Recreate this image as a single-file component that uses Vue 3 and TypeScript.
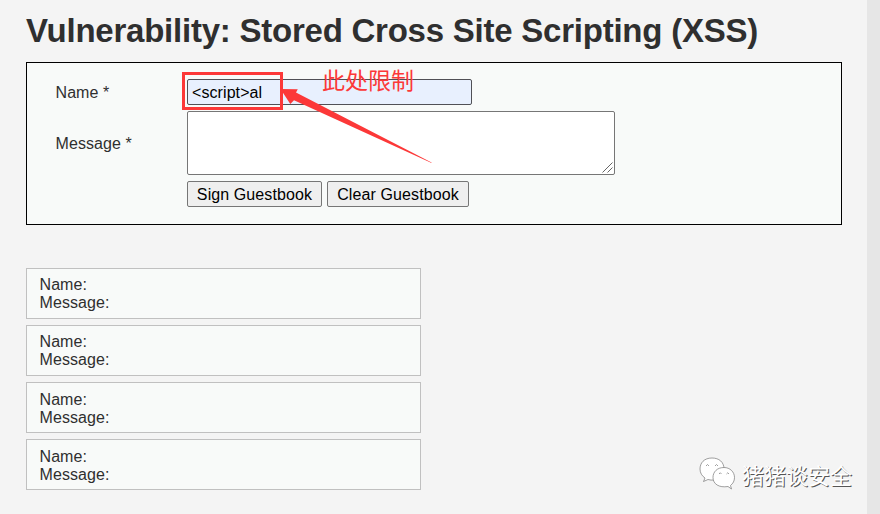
<script setup lang="ts">
import { ref } from 'vue'

interface Entry {
  id: number
  name: string
  message: string
}

const name = ref('<script>al')
const message = ref('')
const entries = ref<Entry[]>([1, 2, 3, 4].map((id) => ({ id, name: '', message: '' })))

function clearGuestbook() {
  entries.value = []
}
</script>

<template>
  <div class="page">
    <main class="content">
      <h1>Vulnerability: Stored Cross Site Scripting (XSS)</h1>
      <form class="panel" @submit.prevent>
        <label class="label" for="name">Name *</label>
        <div class="field">
          <input id="name" v-model="name" class="name" type="text" maxlength="10" autocomplete="off" />
          <span class="marker"></span>
          <span class="note">此处限制</span>
          <svg class="arrow" width="156" height="84" viewBox="0 0 156 84">
            <path d="M0.500 9 L17.800 9.300 L16 12.600 L152 82.700 L151 82.700 L14 20.300 L10.300 24 Z" />
          </svg>
        </div>
        <label class="label" for="message">Message *</label>
        <div class="message-wrap">
          <textarea id="message" v-model="message" class="message"></textarea>
          <svg class="grip" width="11" height="11" viewBox="0 0 11 11">
            <path d="M0.5 10.5 L10.5 0.5 M5.5 10.5 L10.5 5.5" />
          </svg>
        </div>
        <div class="actions">
          <button class="sign" type="submit">Sign Guestbook</button>
          <button class="clear" type="button" @click="clearGuestbook">Clear Guestbook</button>
        </div>
      </form>
      <section class="entries">
        <article v-for="entry in entries" :key="entry.id" class="entry">
          <div>Name: {{ entry.name }}</div>
          <div>Message: {{ entry.message }}</div>
        </article>
      </section>
    </main>
    <aside class="edge"></aside>
    <div class="watermark">
      <svg width="38" height="34" viewBox="0 0 38 34">
        <path class="bubble" d="M13 1 C5 1 1 6 1 12 C1 16 3 19 6 21 L4.500 24.500 L9 22.500 C17 25 25 20 25 12 C25 5 20 1 13 1 Z" />
        <path class="bubble" d="M25 10.500 C18 10.500 14 15 14 20.500 C14 27 20 31 29 29.500 L32.500 32 L31.500 28.500 C34 26.500 35.500 24 35.500 20.500 C35.500 15 31 10.500 25 10.500 Z" />
        <path class="eye" d="M7 9 Q8.500 6 10 9 M16 9 Q17.500 6 19 9 M20 17 Q21.300 14.500 22.500 17 M27.500 17 Q28.800 14.500 30 17" />
      </svg>
      <span>猪猪谈安全</span>
    </div>
  </div>
</template>

<style>
body {
  margin: 0;
  overflow: hidden;
}
</style>

<style scoped>
.page {
  position: relative;
  display: flex;
  width: 880px;
  height: 514px;
  overflow: hidden;
  background: #f4f4f4;
  color: #2f2f2f;
  font: 16px/18px "Liberation Sans", Arial, sans-serif;
  letter-spacing: 0.08px;
}
.content {
  flex: 1;
  padding: 11px 25px 0 26px;
}
.edge {
  width: 13px;
  background: #e6e6e6;
}
h1 {
  height: 40px;
  margin: 0 0 11px;
  font-size: 33px;
  line-height: 40px;
  letter-spacing: -0.235px;
  white-space: nowrap;
}
.panel {
  box-sizing: border-box;
  display: grid;
  grid-template-columns: 131px 428px;
  grid-template-rows: 26px 64px 26px;
  row-gap: 6px;
  align-items: center;
  width: 816px;
  height: 163px;
  padding: 16px 0 0 29px;
  border: 1px solid #000;
  background: #f8faf9;
}
.label {
  padding-top: 2px;
  margin-left: -0.5px;
}
.field,
.message-wrap {
  position: relative;
  height: 100%;
}
.name,
.message {
  display: block;
  box-sizing: border-box;
  height: 100%;
  margin: 0;
  border: 1px solid #767676;
  border-radius: 2px;
  outline: none;
  color: #000;
  font: inherit;
}
.name {
  width: 285px;
  padding: 2px 4px 0;
  border-color: #505056;
  background: #e8f0fe;
  letter-spacing: 0.08px;
}
.message {
  width: 428px;
  padding: 2px;
  background: #fff;
  resize: none;
}
.grip {
  position: absolute;
  right: 2px;
  bottom: 2px;
  fill: none;
  stroke: #666;
  stroke-width: 1;
}
.marker {
  position: absolute;
  left: -5px;
  top: -7px;
  box-sizing: border-box;
  width: 101px;
  height: 38px;
  border: 3px solid #fc3838;
}
.note {
  position: absolute;
  left: 135px;
  top: -15px;
  color: #fc3838;
  font: 23px/30px "Noto Sans CJK SC", sans-serif;
  letter-spacing: 0;
  white-space: nowrap;
}
.arrow {
  position: absolute;
  z-index: 1;
  left: 93px;
  top: 1px;
  overflow: visible;
  fill: #fc3838;
}
.actions {
  grid-column: 2;
  display: flex;
  gap: 5px;
  height: 26px;
}
button {
  box-sizing: border-box;
  padding: 2px 0 0;
  border: 1px solid #767676;
  border-radius: 2px;
  background: #efefef;
  color: #000;
  font: inherit;
  letter-spacing: 0.1px;
  white-space: nowrap;
}
.sign {
  width: 135px;
}
.clear {
  width: 142px;
}
.entries {
  display: grid;
  gap: 6px;
  width: 395px;
  margin-top: 43px;
}
.entry {
  box-sizing: border-box;
  height: 51px;
  padding: 7px 12.5px;
  border: 1px solid #c0c0c0;
  background: #f8faf9;
}
.entry:nth-child(n + 3) {
  padding-top: 8px;
}
.watermark {
  position: absolute;
  left: 699px;
  top: 457px;
  display: flex;
  align-items: flex-start;
  gap: 5px;
  color: #fff;
  font: 22px/34px "Noto Sans CJK SC", sans-serif;
  letter-spacing: 0;
  text-shadow: 1px 1px 0 #555;
  white-space: nowrap;
}
.bubble {
  fill: #fff;
  stroke: #777;
  stroke-width: 0.7;
}
.eye {
  fill: none;
  stroke: #888;
  stroke-width: 0.8;
}
</style>
